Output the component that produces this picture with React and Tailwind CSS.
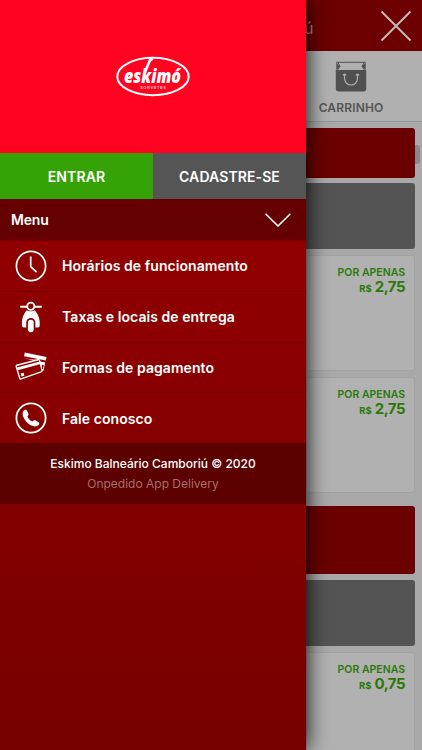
import React from "react";

function Logo() {
  return (
    <svg width="74" height="42" viewBox="0 0 74 42" className="block">
      <ellipse cx="37" cy="20.5" rx="35.7" ry="18.7" fill="none" stroke="#fff" strokeWidth="2" />
      <path d="M37 2.600Q34 3 33 6.500L29 16" fill="none" stroke="#fff" strokeWidth="2.600" />
      <text x="8" y="27" fill="#fff" fontFamily="Open Sans, sans-serif" fontWeight="800" fontStyle="italic" fontSize="19" textLength="57" lengthAdjust="spacingAndGlyphs">eskimó</text>
      <text x="24" y="33.200" fill="#fff" fillOpacity="0.75" fontFamily="Liberation Sans, sans-serif" fontWeight="700" fontSize="4" textLength="26">SORVETES</text>
    </svg>
  );
}

function ClockIcon() {
  return (
    <svg width="32" height="32" viewBox="0 0 32 32" fill="none" stroke="#fff">
      <circle cx="16" cy="16" r="14.6" strokeWidth="1.7" />
      <path d="M15.700 6.500v10.200l5.900 5.400" strokeWidth="1.7" />
    </svg>
  );
}

function ScooterIcon() {
  return (
    <svg width="32" height="32" viewBox="0 0 32 32" fill="none">
      <path d="M6 5.700h6M19.500 5.700h6.500" stroke="#fff" strokeWidth="2" strokeLinecap="round" />
      <circle cx="15.800" cy="5.300" r="3.600" stroke="#fff" strokeWidth="1.800" />
      <path d="M11.800 9.300c1.700 1.400 6.300 1.400 8 0 2.700 2.800 4.900 7.500 4.900 12.700v2.500q0 2-2 2h-2.300v-4.800c0-2.700-2-4.600-4.600-4.600s-4.600 1.900-4.600 4.600v4.800H8.900q-2 0-2-2V22c0-5.200 2.200-9.900 4.900-12.700z" fill="#fff" />
      <rect x="12.900" y="18.700" width="5.800" height="12.500" rx="2.900" fill="#fff" />
    </svg>
  );
}

function CardsIcon() {
  return (
    <svg width="32" height="32" viewBox="0 0 32 32" fill="none">
      <path d="M9.800 1.500L31.500 6l-.7 3.600L9.100 5.200z" fill="#fff" />
      <path d="M8.300 7.200L30.200 11.600 28.600 19.500l-3.600.5-3-11z" fill="#fff" />
      <path d="M1.800 14.200L23 8.700q1.300-.3 1.600 1l2.500 9.500q.3 1.300-1 1.600L6.200 27.900q-1.300.3-1.600-1L1.300 15.700q-.3-1.200.5-1.500z" fill="#900000" stroke="#fff" strokeWidth="1.400" />
      <path d="M2 16.400L24.800 10.400l.7 2.700L2.800 19.200z" fill="#fff" />
      <path d="M5.600 22.500l3-.8.8 3-3 .8z" fill="#fff" />
      <path d="M27 13.700l1.800.4-.8 3.800h-1z" fill="#900000" />
    </svg>
  );
}

function PhoneIcon() {
  return (
    <svg width="32" height="32" viewBox="0 0 32 32" fill="none">
      <circle cx="16" cy="16" r="14.600" stroke="#fff" strokeWidth="1.800" />
      <path d="M8.700 8.500c1.300-1.300 2.700-1 3.500.6l1.100 2.300c.6 1.300.1 2-.9 2.900.7 2.400 2.700 4.400 5.100 5.200.9-1.400 1.900-1.600 3.200-.9l2.500 1.400c1.400.9 1.500 2 .4 3-2.700 2.600-7.300 1.500-11-1.900-3.900-3.700-6.500-9.700-3.900-12.600z" fill="#fff" />
    </svg>
  );
}

function BagIcon() {
  return (
    <svg width="32" height="32" viewBox="0 0 32 32" fill="none" className="block">
      <path d="M1.300 1.300h29.400" stroke="#505050" />
      <path d="M1.300 1.300L5 5.500 1.300 9zM30.700 1.300L27 5.500 30.700 9z" fill="#505050" />
      <path d="M3 1.500l2 4L2.500 9M29 1.500l-2 4L29.500 9" stroke="#505050" />
      <path d="M.8 9h30.400v19q0 2.400-2.400 2.400H3.200Q.8 30.400.8 28z" fill="#505050" />
      <path d="M9.500 13.500V17c0 9.300 13 9.300 13 0v-3.500M7.800 14.500q1.700-2.600 3.400 0M20.800 14.500q1.700-2.600 3.400 0" stroke="#b0b0b0" strokeWidth="1.200" />
    </svg>
  );
}

const items = [
  { label: "Horários de funcionamento", Icon: ClockIcon },
  { label: "Taxas e locais de entrega", Icon: ScooterIcon },
  { label: "Formas de pagamento", Icon: CardsIcon },
  { label: "Fale conosco", Icon: PhoneIcon },
];

function Drawer() {
  return (
    <aside className="relative z-10 flex h-full w-[306px] shrink-0 flex-col bg-linear-to-b from-[#9e0000] to-[#760000] text-white shadow-[0_0_20px_rgba(0,0,0,0.95)]">
      <div className="flex h-[153px] items-center justify-center bg-[#ff0320]">
        <Logo />
      </div>
      <div className="flex h-[46px] text-[14px] font-semibold tracking-[0.1px]">
        <button className="flex-1 bg-[#35a306]">ENTRAR</button>
        <button className="flex-1 bg-[#555]">CADASTRE-SE</button>
      </div>
      <div className="flex h-[41px] items-center justify-between bg-[#640000] pr-[15px] pl-[11px] text-[14px] font-semibold tracking-[-0.2px]">
        Menu
        <svg width="26" height="14" viewBox="0 0 26 14" fill="none" stroke="#fff" strokeWidth="1.6">
          <path d="M.6.800L13 13 25.400.800" />
        </svg>
      </div>
      <nav className="flex h-[203px] flex-col">
        {items.map(({ label, Icon }) => (
          <a key={label} className="flex h-[51px] items-center gap-[15px] border-t border-[#780000] pl-[15px] text-[14px] font-semibold tracking-[0.06px]">
            <Icon />
            <span>{label}</span>
          </a>
        ))}
      </nav>
      <footer className="flex h-[61px] flex-col items-center bg-[#5d0000] pt-[11px] text-[12px] leading-5">
        <p className="font-medium">Eskimo Balneário Camboriú © 2020</p>
        <p className="text-[#a66d6d]">Onpedido App Delivery</p>
      </footer>
    </aside>
  );
}

function Product({ price, className }) {
  return (
    <div className={"shrink-0 rounded-[3px] border border-[#a2a2a2] bg-[#b1b1b1] pt-[10px] pr-[9px] text-right text-[#2a7908] " + className}>
      <p className="text-[10.5px] leading-[13px] font-semibold">POR APENAS</p>
      <p className="flex items-baseline justify-end gap-[3px] text-[15px] leading-[15px] font-bold tracking-[-0.5px]">
        <span className="text-[9.5px] tracking-normal">R$</span>
        <span>{price}</span>
      </p>
    </div>
  );
}

function Store() {
  return (
    <main className="flex min-w-0 flex-1 flex-col bg-[#a9a9a9]">
      <header className="flex h-[51px] shrink-0 items-center justify-between bg-[#6d0000] pr-[10px]">
        <span className="-ml-[2px] pt-1 text-[16px] text-[#b59090]">ú</span>
        <svg width="32" height="32" viewBox="0 0 32 32" stroke="#c9b8b8" strokeWidth="2">
          <path d="M1.500 1.500l29 29M30.500 1.500l-29 29" />
        </svg>
      </header>
      <div className="flex h-[71px] shrink-0 flex-col items-center border-b border-[#96969a] bg-[#b0b0b0] pt-[10px] pr-[26px]">
        <BagIcon />
        <span className="mt-[7px] text-[12px] leading-4 font-semibold tracking-[0.15px] text-[#555]">CARRINHO</span>
      </div>
      <div className="flex min-h-0 flex-1 flex-col overflow-hidden pt-[6px] pr-[7px]">
        <div className="relative h-[50px] shrink-0 rounded-r-[3px] bg-[#6b0000]">
          <span className="absolute top-[17px] -right-[5px] h-[19px] w-[5px] rounded-r-[3px] bg-[#898989]" />
        </div>
        <div className="mt-[5px] h-[66px] shrink-0 rounded-r-[3px] bg-[#545454]" />
        <Product price="2,75" className="mt-[6px] h-[116px]" />
        <Product price="2,75" className="mt-[6px] h-[116px]" />
        <div className="mt-[13px] h-[68px] shrink-0 rounded-r-[3px] bg-[#6b0000]" />
        <div className="mt-[6px] h-[66px] shrink-0 rounded-r-[3px] bg-[#545454]" />
        <Product price="0,75" className="mt-[6px] h-[116px]" />
      </div>
    </main>
  );
}

export default function App() {
  return (
    <div className="flex h-screen w-full overflow-hidden font-['Inter',sans-serif]">
      <Drawer />
      <Store />
    </div>
  );
}
